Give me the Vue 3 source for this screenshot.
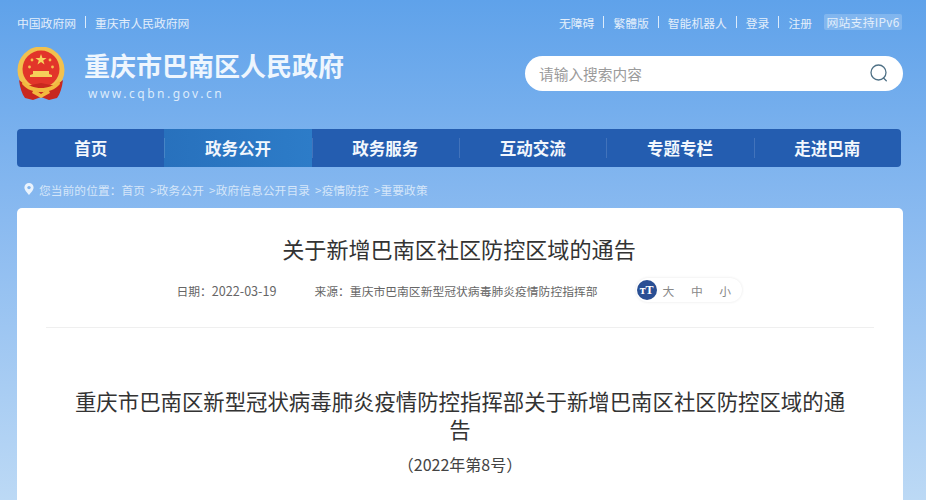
<script setup>
const leftLinks = ['中国政府网', '重庆市人民政府网'];
const rightLinks = ['无障碍', '繁體版', '智能机器人', '登录', '注册'];
const navItems = [
  { name: '首页' },
  { name: '政务公开', active: true },
  { name: '政务服务' },
  { name: '互动交流' },
  { name: '专题专栏' },
  { name: '走进巴南' },
];
const crumbs = ['首页', '政务公开', '政府信息公开目录', '疫情防控', '重要政策'];
</script>

<template>
  <div class="page">
    <div class="top">
      <div class="top__links">
        <template v-for="(link, i) in leftLinks" :key="link">
          <i v-if="i" class="top__sep"></i>
          <a>{{ link }}</a>
        </template>
      </div>
      <div class="top__links">
        <template v-for="(link, i) in rightLinks" :key="link">
          <i v-if="i" class="top__sep"></i>
          <a>{{ link }}</a>
        </template>
        <span class="top__badge">网站支持IPv6</span>
      </div>
    </div>

    <div class="head">
      <div class="brand">
        <svg class="brand__logo" viewBox="0 0 48 54" width="48" height="54">
          <circle cx="24" cy="23" r="23.5" fill="#f2c14e" />
          <circle cx="24" cy="22" r="18.5" fill="#e2352a" />
          <polygon points="24,7 25.4,11 29.6,11 26.2,13.5 27.5,17.5 24,15 20.5,17.5 21.8,13.5 18.4,11 22.6,11" fill="#f6d55c" />
          <circle cx="15" cy="13" r="1.4" fill="#f6c24e" />
          <circle cx="33" cy="13" r="1.4" fill="#f6c24e" />
          <circle cx="12.5" cy="20" r="1.4" fill="#f6c24e" />
          <circle cx="35.5" cy="20" r="1.4" fill="#f6c24e" />
          <path d="M13 30h22v-2l-3-1v-3h-16v3l-3 1z" fill="#f6d05a" />
          <path d="M2 33c1 8 3 14 6 18l8 2 8-3 8 3 8-2c3-4 5-10 6-18-5 4-8 6-12 5l-10-2-10 2c-4 1-7-1-12-5z" fill="#c8281f" />
          <path d="M6 33c5 6 11 8 18 8s13-2 18-8l1 4c-5 6-12 8-19 8s-14-2-19-8z" fill="#f2b93f" />
          <path d="M17 42l7 5 7-5 2 4-9 5-9-5z" fill="#f2b93f" />
        </svg>
        <div>
          <h1 class="brand__name">重庆市巴南区人民政府</h1>
          <p class="brand__url">www.cqbn.gov.cn</p>
        </div>
      </div>
      <div class="search">
        <input class="search__input" type="text" placeholder="请输入搜索内容" />
        <svg class="search__icon" viewBox="0 0 20 20" width="20" height="20" fill="none" stroke="#4f7186" stroke-width="1.3">
          <circle cx="9.5" cy="9.5" r="7.5" />
          <path d="M14.5 15l2.8 2.8" stroke-linecap="round" />
        </svg>
      </div>
    </div>

    <nav class="nav">
      <a
        v-for="item in navItems"
        class="nav__item"
        :class="{ 'nav__item--active': item.active }"
        :key="item.name"
      >
        {{ item.name }}
      </a>
    </nav>

    <div class="crumbs">
      <svg viewBox="0 0 10 12" width="10" height="12">
        <path d="M5 0a4.6 4.6 0 0 0-4.6 4.6C.4 7.6 5 12 5 12s4.6-4.4 4.6-7.4A4.6 4.6 0 0 0 5 0z" fill="#eaf3fd" />
        <circle cx="5" cy="4.6" r="1.7" fill="#7fb4ee" />
      </svg>
      <span class="crumbs__text">您当前的位置：<template v-for="(crumb, i) in crumbs" :key="crumb">{{ i ? ' >' : '' }}{{ crumb }}</template></span>
    </div>

    <main class="card">
      <h2 class="card__title">关于新增巴南区社区防控区域的通告</h2>
      <div class="meta">
        <span>日期：<span class="meta__date">2022-03-19</span></span>
        <span>来源：重庆市巴南区新型冠状病毒肺炎疫情防控指挥部</span>
        <div class="fontsize">
          <span class="fontsize__icon">тT</span>
          <span>大</span>
          <span>中</span>
          <span>小</span>
        </div>
      </div>
      <div class="article">
        <h3 class="article__title">重庆市巴南区新型冠状病毒肺炎疫情防控指挥部关于新增巴南区社区防控区域的通告</h3>
        <p class="article__no">（2022年第8号）</p>
      </div>
    </main>
  </div>
</template>

<style>
body {
  margin: 0;
}
</style>

<style scoped>
.page {
  height: 500px;
  overflow: hidden;
  box-sizing: border-box;
  padding: 14px 23px 0 17px;
  background: linear-gradient(180deg, #5fa2ea 0%, #8abaf0 44%, #bcd9f5 100%);
  font-family: "Noto Sans CJK SC", "Noto Sans", sans-serif;
}

.top {
  display: flex;
  justify-content: space-between;
  align-items: center;
  height: 16px;
}

.top__links {
  display: flex;
  align-items: center;
  font-size: 11.8px;
  color: #e4effb;
}

.top__sep {
  width: 1px;
  height: 12px;
  margin: 0 9px;
  background: #dcebfb;
}

.top__badge {
  width: 78px;
  margin: 0 1px 0 12px;
  line-height: 16px;
  letter-spacing: 0.3px;
  text-align: center;
  background: rgba(255, 255, 255, 0.2);
  border-radius: 2px;
}

.head {
  display: flex;
  justify-content: space-between;
  height: 99px;
}

.brand {
  display: flex;
  gap: 19px;
}

.brand__logo {
  margin: 17px 0 0;
}

.brand__name {
  margin: 17px 0 0;
  font-size: 26px;
  line-height: 36px;
  font-weight: 700;
  color: #eef6fe;
}

.brand__url {
  margin: 2px 0 0 4px;
  font-family: "Noto Sans", sans-serif;
  font-size: 12px;
  line-height: 18px;
  letter-spacing: 2.5px;
  color: #dcebfb;
}

.search {
  position: relative;
  width: 378px;
  height: 35px;
  margin: 26px 0 0;
}

.search__input {
  display: block;
  width: 100%;
  height: 100%;
  box-sizing: border-box;
  padding: 0 48px 0 14px;
  border: none;
  border-radius: 18px;
  outline: none;
  background: #fff;
  font-family: inherit;
  font-size: 14.7px;
}

.search__input::placeholder {
  color: #9b9b9b;
}

.search__icon {
  position: absolute;
  top: 7px;
  right: 14px;
}

.nav {
  display: flex;
  height: 38px;
  width: 884px;
  border-radius: 4px;
  overflow: hidden;
  background: #245db0;
}

.nav__item {
  flex: 1;
  display: flex;
  align-items: center;
  justify-content: center;
  font-size: 16.5px;
  font-weight: 700;
  color: #f2f7fd;
  position: relative;
}

.nav__item + .nav__item::before {
  content: '';
  position: absolute;
  left: 0;
  top: 9px;
  bottom: 9px;
  width: 1px;
  background: rgba(255, 255, 255, 0.14);
}

.nav__item--active {
  background: linear-gradient(90deg, #2871bd, #2d7cc8);
}

.crumbs {
  display: flex;
  align-items: center;
  gap: 5px;
  height: 41px;
  padding: 3px 0 0 7px;
  box-sizing: border-box;
  font-size: 11.7px;
}

.crumbs__text {
  color: #d5e6f9;
  white-space: pre;
  letter-spacing: 0.1px;
  word-spacing: 2.4px;
}

.card {
  width: 886px;
  min-height: 320px;
  box-sizing: border-box;
  border-radius: 5px 5px 0 0;
  background: #fff;
  text-align: center;
}

.card__title {
  margin: 0;
  padding: 24px 2px 0 0;
  font-size: 22.1px;
  line-height: 32px;
  font-weight: 400;
  color: #333;
}

.meta {
  display: flex;
  justify-content: center;
  align-items: center;
  gap: 38px;
  height: 24px;
  margin: 14px 29px 0 29px;
  padding: 0 2px 25px 0;
  border-bottom: 1px solid #efefef;
  font-size: 11.8px;
  color: #666;
}

.meta__date {
  font-size: 12.6px;
}

.fontsize {
  display: flex;
  align-items: center;
  gap: 16.5px;
  width: 106px;
  height: 24px;
  box-sizing: border-box;
  padding-left: 1px;
  border-radius: 12px;
  color: #888;
  box-shadow: 0 0 3px rgba(0, 0, 0, 0.1);
}

.fontsize__icon {
  width: 20px;
  height: 20px;
  margin-right: -10.5px;
  border-radius: 50%;
  background: #2a4f94;
  color: #fff;
  font-family: "Liberation Serif", serif;
  font-size: 12px;
  line-height: 20px;
  font-weight: 700;
  text-align: center;
}

.article {
  width: 780px;
  margin: 0 auto;
  padding-top: 59px;
}

.article__title {
  margin: 0;
  font-size: 21.4px;
  line-height: 28px;
  font-weight: 400;
  color: #333;
}

.article__no {
  margin: 9px 0 0;
  font-size: 16px;
  line-height: 24px;
  color: #444;
}
</style>
